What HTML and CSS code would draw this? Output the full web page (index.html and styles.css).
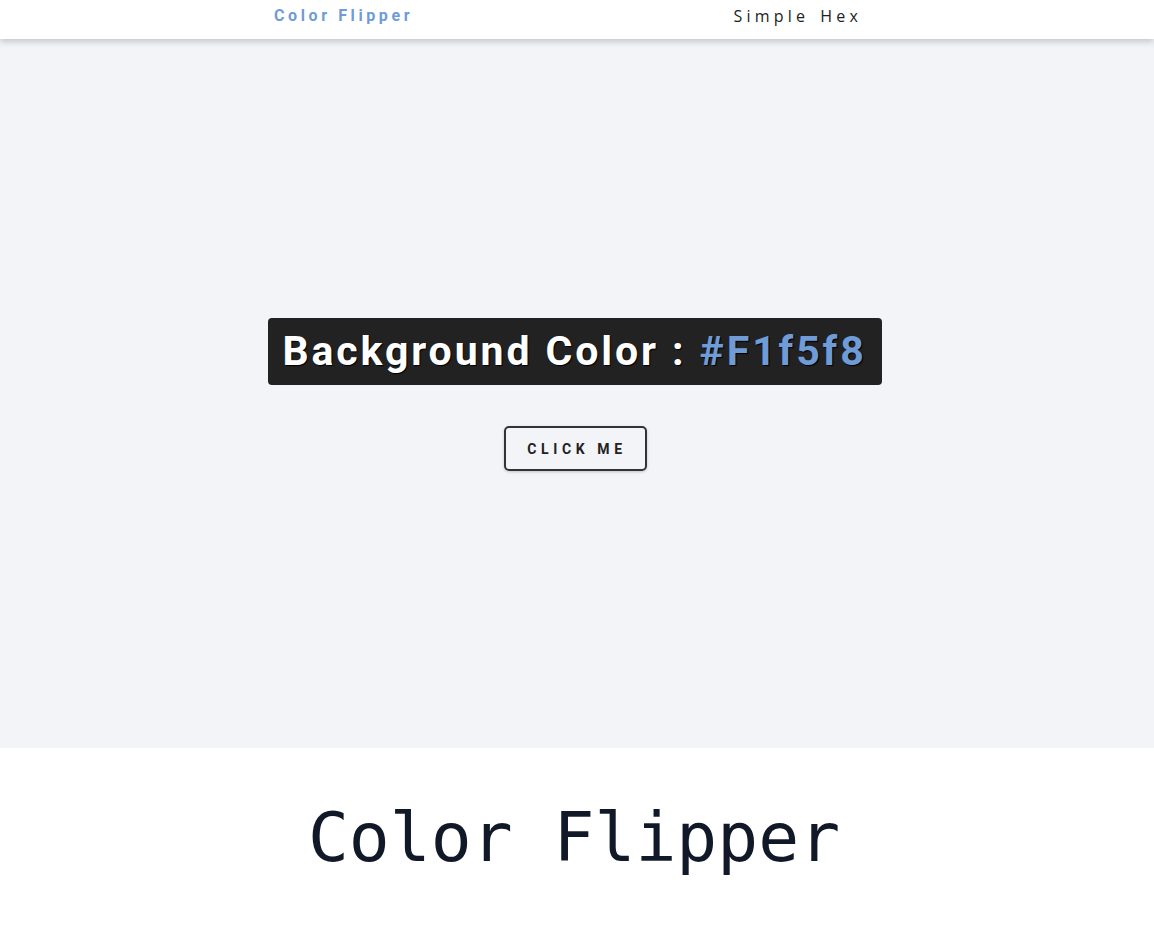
FILE: index.html
```html
<!DOCTYPE html>
<html lang="en">
<head>
<meta charset="utf-8">
<title>Color Flipper</title>
<link rel="stylesheet" href="styles.css">
</head>
<body>
<nav class="navbar">
  <div class="nav-center">
    <span class="brand">Color Flipper</span>
    <ul class="nav-links">
      <li>Simple</li>
      <li>Hex</li>
    </ul>
  </div>
</nav>
<main class="stage">
  <div class="content">
    <h2 class="color-label">Background Color : <span class="hex">#F1f5f8</span></h2>
    <button class="btn">click me</button>
  </div>
</main>
<footer class="footer">
  <h1 class="title">Color Flipper</h1>
</footer>
</body>
</html>
```
FILE: styles.css
```css
* { box-sizing: border-box; }
html, body { margin: 0; padding: 0; }
body {
  background: #ffffff;
  font-family: Roboto, "Liberation Sans", sans-serif;
  width: 1154px;
}
.navbar {
  position: relative;
  z-index: 2;
  height: 39px;
  background: #fff;
  box-shadow: 0 3px 6px rgba(0, 0, 0, 0.18);
}
.nav-center {
  width: 588px;
  margin-left: 274px;
  height: 31px;
  display: flex;
  align-items: center;
  justify-content: space-between;
}
.brand {
  color: #6f9bd6;
  font-weight: 700;
  font-size: 16px;
  letter-spacing: 3.6px;
}
.nav-links {
  display: flex;
  gap: 11px;
  list-style: none;
  margin: 0;
  padding: 0;
  font-family: "Open Sans", sans-serif;
  font-size: 16px;
  letter-spacing: 4.2px;
  color: #222;
}
.stage {
  background: #f2f4f8;
  height: 709px;
  display: flex;
  align-items: center;
  justify-content: center;
  padding-right: 4px;
}
.content {
  display: flex;
  flex-direction: column;
  align-items: center;
  padding-top: 2px;
}
.color-label {
  margin: 0;
  background: #222222;
  color: #fff;
  border-radius: 4px;
  padding: 10px 15px 10px 14px;
  font-size: 41px;
  font-weight: 700;
  letter-spacing: 2.9px;
  line-height: 47px;
  text-shadow: 1px 1px 1px #000;
}
.hex { color: #6f9bd6; }
.btn {
  margin-top: 41px;
  background: transparent;
  border: 2px solid #333;
  border-radius: 5px;
  width: 143px;
  height: 45px;
  padding: 0 0 0 4px;
  font-family: Roboto, sans-serif;
  font-weight: 700;
  font-size: 14px;
  letter-spacing: 4.6px;
  text-transform: uppercase;
  color: #222;
  box-shadow: 0 1px 3px rgba(0,0,0,0.2);
}
.footer {
  height: 180px;
  display: flex;
  justify-content: center;
}
.title {
  margin: 50px 0 0;
  font-family: "DejaVu Sans Mono", monospace;
  font-weight: 400;
  font-size: 68px;
  line-height: 80px;
  color: #111827;
  transform: translateX(-3px);
}
```
